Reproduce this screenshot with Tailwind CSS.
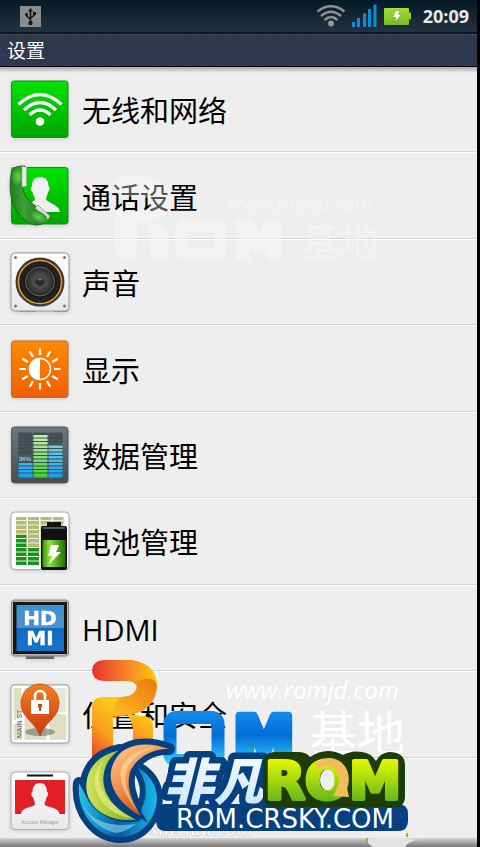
<!DOCTYPE html>
<html lang="zh-CN">
<head>
<meta charset="utf-8">
<meta name="viewport" content="width=device-width, initial-scale=1">
<title>设置</title>
<script src="https://cdn.jsdelivr.net/npm/@tailwindcss/browser@4"></script>
</head>
<body class="bg-black font-['Open_Sans','Noto_Sans_CJK_SC',sans-serif]">
<div class="relative mr-[3px] flex min-h-screen flex-col overflow-hidden bg-[#eeeeee]">
  <header>
    <div class="flex h-[34px] items-center border-b-2 border-[#10161f] bg-linear-to-b from-[#031a27] to-[#243242] pr-2 pl-5">
      <svg class="size-[21px]" viewBox="0 0 21 21" role="img" aria-label="USB"><rect width="21" height="21" fill="#8b8b8b"/><g fill="none" stroke="#141414" stroke-width="1.5"><path d="M10.500 16V4M10.500 14C10.500 11.500 6.500 12 6.500 8.500M10.500 12.500C10.500 10.500 14.500 11 14.500 7.500"/></g><path d="M10.500 2L13 5.500H8z" fill="#141414"/><circle cx="10.500" cy="17" r="2.200" fill="#141414"/><circle cx="6.500" cy="8.500" r="1.500" fill="#141414"/><path d="M13 6h3v3h-3z" fill="#141414"/></svg>
      <div class="ml-auto flex items-center">
        <svg class="h-[22px] w-[30px]" viewBox="0 0 30 22" role="img" aria-label="Wi-Fi"><g fill="none" stroke="#8e9192" stroke-width="2.500"><path d="M1.500 6.500Q15-4 28.500 6.500"/><path d="M5 11Q15 2.500 25 11"/><path d="M8.500 15Q15 9 21.500 15"/></g><circle cx="15" cy="18.500" r="2.900" fill="#999"/></svg>
        <svg class="ml-1.5 h-[24px] w-[25px]" viewBox="0 0 25 24" role="img" aria-label="信号"><path fill="#0d8fd4" d="M0 18h3v5H0zM5 14h3v9H5zM11 9.500h3V23h-3zM16 5h3v18h-3zM21.500.500h3V23h-3z"/></svg>
        <svg class="ml-[7px] h-[17px] w-[27px]" viewBox="0 0 27 17" role="img" aria-label="充电"><defs><linearGradient id="bt" x2="0" y2="1"><stop stop-color="#a3dc36"/><stop offset="1" stop-color="#76bd1b"/></linearGradient></defs><path fill="url(#bt)" d="M1 0h23q1 0 1 1v3.500h2v7h-2V16q0 1-1 1H1q-1 0-1-1V1q0-1 1-1z"/><path d="M11.500 2.500h4.500l-1.500 4h3L10.500 15l1.300-5.500H8.500z" fill="#fff" stroke="#548719" stroke-width=".5"/></svg>
        <time class="ml-3 text-[18px] leading-6 font-bold text-[#e6e8ea]">20:09</time>
      </div>
    </div>
    <div class="flex h-[33px] items-center border-t border-b border-t-[#454e60] border-b-black bg-[#2e364c] bg-[repeating-linear-gradient(45deg,#ffffff08_0px,#ffffff08_1px,transparent_1px,transparent_3px)] pl-[7px]">
      <h1 class="text-[19px] leading-6 text-white">设置</h1>
    </div>
  </header>
  <div class="h-0"><div class="h-[6px] bg-linear-to-b from-black/30 to-transparent"></div></div>

  <ul class="mb-1 flex flex-1 flex-col text-[29px] leading-9 text-black">
    <li class="flex flex-1 border-b border-[#d5d5d5]"><a href="#wireless" class="flex flex-1 items-center gap-[10px] pl-2">
      <svg class="size-16 shrink-0 drop-shadow-sm" viewBox="0 0 64 64" aria-hidden="true"><defs><linearGradient id="gr" x2="0" y2="1"><stop stop-color="#00e400"/><stop offset="1" stop-color="#00a500"/></linearGradient></defs><rect x="3.500" y="4" width="56.500" height="56.500" rx="2.500" fill="url(#gr)" stroke="#188c22"/><g fill="none" stroke="#fff" stroke-width="3.300"><path d="M10.500 27.500Q32 7.500 53.500 27.500"/><path d="M16 33Q32 18 48 33"/><path d="M21.500 38Q32 28 42.500 38"/></g><circle cx="32" cy="44.500" r="4.300" fill="#fff"/></svg>
      <span class="pt-1">无线和网络</span></a></li>
    <li class="flex flex-1 border-t border-b border-t-white border-b-[#d5d5d5]"><a href="#call" class="flex flex-1 items-center gap-[10px] pl-2">
      <svg class="size-16 shrink-0 drop-shadow-sm" viewBox="0 0 64 64" aria-hidden="true"><defs><linearGradient id="ph" x2="1"><stop stop-color="#1c7a22"/><stop offset=".35" stop-color="#3fa032"/><stop offset="1" stop-color="#187520"/></linearGradient><radialGradient id="pe"><stop stop-color="#6cd04e"/><stop offset="1" stop-color="#2b9327"/></radialGradient></defs><rect x="3.500" y="3.500" width="56.500" height="56.500" rx="2.500" fill="url(#gr)" stroke="#188c22"/><path d="M32 13c6 0 8.500 4 8.500 9 2 1 1 5-.500 6-.500 4-2 5-2 7 1 4 13 5 14 13H15c1-7 11-9 12-13 0-2-2-3-2.500-7-2-1-2-5-.500-6 0-5 2-9 8-9z" fill="#f0f0f0"/><path d="M2.500 14Q3 2 13 2H17V22L14 23Q17 36 28 42L40 54Q34 64 23 60Q-1 47 2.500 14Z" fill="url(#ph)" stroke="#145d1b" stroke-width=".8"/><ellipse cx="10" cy="13" rx="6.500" ry="9.500" fill="url(#pe)"/><path d="M14 2.500L18.500 3V22L14 23Z" fill="#e4eee4" stroke="#8ba38d" stroke-width=".5"/><path d="M27 44L30 41L42 52L40 56Z" fill="#ddd" stroke="#70846f" stroke-width=".6"/><ellipse cx="30.500" cy="53" rx="9.500" ry="5.500" transform="rotate(25 30.500 53)" fill="url(#pe)"/></svg>
      <span class="pt-1">通话设置</span></a></li>
    <li class="flex flex-1 border-t border-b border-t-white border-b-[#d5d5d5]"><a href="#sound" class="flex flex-1 items-center gap-[10px] pl-2">
      <svg class="size-16 shrink-0 drop-shadow-sm" viewBox="0 0 64 64" aria-hidden="true"><defs><linearGradient id="wh" x2="0" y2="1"><stop stop-color="#fff"/><stop offset="1" stop-color="#e6e7e9"/></linearGradient><radialGradient id="sp"><stop stop-color="#202020"/><stop offset=".28" stop-color="#181818"/><stop offset=".32" stop-color="#555"/><stop offset="1" stop-color="#272727"/></radialGradient></defs><path d="M10 60h18v2H12zM44 60h17l-2 2H46z" fill="#999"/><rect x="3" y="3" width="58" height="58" rx="4" fill="url(#wh)" stroke="#999"/><g fill="#777"><circle cx="7.500" cy="7.500" r="1.500"/><circle cx="56.500" cy="7.500" r="1.500"/><circle cx="7.500" cy="56" r="1.500"/><circle cx="56.500" cy="56" r="1.500"/></g><circle cx="32" cy="32" r="24.500" fill="#3b3b3d"/><circle cx="32" cy="32" r="21.500" fill="#171717" stroke="#e79b20" stroke-width="1.500"/><circle cx="32" cy="32" r="18" fill="none" stroke="#303030" stroke-width="3" stroke-dasharray="1 1"/><circle cx="32" cy="31.500" r="14.500" fill="url(#sp)" stroke="#666"/><circle cx="32" cy="31" r="4.500" fill="#292929"/><ellipse cx="32" cy="29" rx="3" ry="1.500" fill="#666"/></svg>
      <span class="pt-1">声音</span></a></li>
    <li class="flex flex-1 border-t border-b border-t-white border-b-[#d5d5d5]"><a href="#display" class="flex flex-1 items-center gap-[10px] pl-2">
      <svg class="size-16 shrink-0 drop-shadow-sm" viewBox="0 0 64 64" aria-hidden="true"><defs><linearGradient id="og" x2="0" y2="1"><stop stop-color="#ff8a00"/><stop offset="1" stop-color="#ed5f00"/></linearGradient></defs><rect x="3.500" y="4" width="56.500" height="56.500" rx="2.500" fill="url(#og)" stroke="#bd6d28"/><circle cx="32" cy="32" r="10.500" fill="none" stroke="#fff" stroke-width="1.500"/><path d="M32 21a11 11 0 0 0 0 22z" fill="#fff"/><g stroke="#fff" stroke-width="2.200"><path d="M32 11.500v6.500M32 46v6.500M11.500 32h6.500M46 32h6.500"/><path d="M32 11.500v6.500M32 46v6.500M11.500 32h6.500M46 32h6.500" transform="rotate(30 32 32)"/><path d="M32 11.500v6.500M32 46v6.500M11.500 32h6.500M46 32h6.500" transform="rotate(60 32 32)"/></g></svg>
      <span class="pt-1">显示</span></a></li>
    <li class="flex flex-1 border-t border-b border-t-white border-b-[#d5d5d5]"><a href="#data" class="flex flex-1 items-center gap-[10px] pl-2">
      <svg class="size-16 shrink-0 drop-shadow-sm" viewBox="0 0 64 64" aria-hidden="true"><defs><linearGradient id="sl" x2="0" y2="1"><stop stop-color="#6c777d"/><stop offset="1" stop-color="#454d53"/></linearGradient><linearGradient id="b1" x2="0" y2="1"><stop stop-color="#78cdec"/><stop offset="1" stop-color="#10a2f1"/></linearGradient><linearGradient id="b2" x2="0" y2="1"><stop stop-color="#d0efb7"/><stop offset="1" stop-color="#3fd136"/></linearGradient></defs><rect x="3.500" y="4" width="56.500" height="56" rx="3" fill="url(#sl)" stroke="#50585e"/><path d="M10.500 9.500h14v45h-14zM25.500 9.500h14v45h-14zM40.500 9.500h14v45h-14z" fill="#485158"/><path d="M10.500 39h14v15.500h-14zM40.500 22h14v32.500h-14z" fill="url(#b1)"/><path d="M25.500 12h14v42.500h-14z" fill="url(#b2)"/><path d="M10 11.500h45M10 15h45M10 18.500h45M10 22h45M10 25.500h45M10 29h45M10 32.500h45M10 36h45M10 39.500h45M10 43h45M10 46.500h45M10 50h45" stroke="#394d4d" stroke-width="1.100"/><rect x="10.500" y="32" width="14" height="6" fill="#4f5960"/><text x="11" y="38" font-family="Liberation Sans" font-weight="bold" font-size="6" fill="#8bd1ea">36%</text></svg>
      <span class="pt-1">数据管理</span></a></li>
    <li class="flex flex-1 border-t border-b border-t-white border-b-[#d5d5d5]"><a href="#battery" class="flex flex-1 items-center gap-[10px] pl-2">
      <svg class="size-16 shrink-0 drop-shadow-sm" viewBox="0 0 64 64" aria-hidden="true"><defs><linearGradient id="bb" x2="1"><stop stop-color="#3b8d12"/><stop offset=".3" stop-color="#90e337"/><stop offset="1" stop-color="#246c08"/></linearGradient></defs><rect x="3" y="3" width="58" height="57.500" rx="4" fill="#fff" stroke="#aaa"/><path d="M8 8h10.500v48H8zM20 8h11v48H20zM32.500 8h11v48h-11zM45 8h10.500v20H45z" fill="#b4bb79"/><path d="M8 26h10.500v30H8zM20 39h11v17H20z" fill="#16951c"/><path d="M7 11.500h50M7 16h50M7 20.500h50M7 25h50M7 29.500h35M7 34h35M7 38.500h35M7 43h35M7 47.500h35M7 52h35" stroke="#edf0df" stroke-width="1"/><path d="M39 13h14v4h4q2 0 2 2v40q0 2-2 2H35q-2 0-2-2V19q0-2 2-2h4z" fill="#111"/><path d="M35 18h22v2H35z" fill="#555"/><path d="M34.500 31h23v27h-23z" fill="url(#bb)"/><path d="M43 36h8l-3 7h5L41 55l3-8h-4z" fill="#fff"/></svg>
      <span class="pt-1">电池管理</span></a></li>
    <li class="flex flex-1 border-t border-b border-t-white border-b-[#d5d5d5]"><a href="#hdmi" class="flex flex-1 items-center gap-[10px] pl-2">
      <svg class="size-16 shrink-0 drop-shadow-sm" viewBox="0 0 64 64" aria-hidden="true"><defs><linearGradient id="hd" x2="0" y2="1"><stop stop-color="#3e91cf"/><stop offset=".5" stop-color="#4a92d1"/><stop offset=".51" stop-color="#126ac0"/><stop offset="1" stop-color="#1173d2"/></linearGradient></defs><path d="M18 60h28v3H18z" fill="#666"/><rect x="3.500" y="4" width="57" height="56" rx="3" fill="#b6b6b6" stroke="#888"/><rect x="5" y="6" width="54" height="52" fill="#161616"/><rect x="8.500" y="9" width="47.500" height="46" fill="url(#hd)"/><g font-family="DejaVu Sans" font-weight="bold" font-size="20" fill="#fff" stroke="#fff" stroke-width=".4" text-anchor="middle"><text x="32" y="29">HD</text><text x="32" y="49">MI</text></g></svg>
      <span class="pt-1">HDMI</span></a></li>
    <li class="flex flex-1 border-t border-b border-t-white border-b-[#d5d5d5]"><a href="#security" class="flex flex-1 items-center gap-[10px] pl-2">
      <svg class="size-16 shrink-0 drop-shadow-sm" viewBox="0 0 64 64" aria-hidden="true"><defs><linearGradient id="pn" x2="0" y2="1"><stop stop-color="#f08121"/><stop offset="1" stop-color="#cf3210"/></linearGradient></defs><rect x="3" y="3" width="58" height="58" rx="3" fill="#fff" stroke="#999"/><path d="M5.500 6h53v52h-53z" fill="#dedfc3"/><path d="M15 6v52M5 41l18-12 36 2M40 31v27" stroke="#fff" stroke-width="3" fill="none"/><path d="M24 6h34v25L24 27z" fill="#e8e8d8"/><text transform="translate(14 56) rotate(-90)" font-family="Liberation Sans" font-size="7" fill="#666">MAIN ST.</text><ellipse cx="32" cy="50" rx="15" ry="4" fill="#777" opacity=".65"/><path d="M32 54Q30 47 20 37Q13 30 13 21A19 19 0 0 1 51 21Q51 30 44 37Q34 47 32 54Z" fill="url(#pn)" stroke="#b84313" stroke-width=".7"/><path d="M23 18h18v14H23z" fill="#fff"/><path d="M27 18v-4a5 5 0 0 1 10 0v4" fill="none" stroke="#fff" stroke-width="2.600"/><path d="M30 22h4v3l-1 1v3h-2v-3l-1-1z" fill="#c94912"/></svg>
      <span class="pt-1">位置和安全</span></a></li>
    <li class="flex flex-1 border-t border-white"><a href="#accounts" aria-label="Account Manager" class="flex flex-1 items-center gap-[10px] pl-2">
      <svg class="size-16 shrink-0 drop-shadow-sm" viewBox="0 0 64 64" aria-hidden="true"><rect x="3" y="3" width="58" height="57.500" rx="4" fill="url(#wh)" stroke="#aaa"/><path d="M19 5.500h26v2H19z" fill="#111"/><path d="M7 11h50v34H7z" fill="#e41e27"/><path d="M32 14c5 0 7 4 7 9 2 0 1 5-.500 5-.500 4-2 5-2 7 1 4 14 2 15 10H13c1-8 13-6 14-10 0-2-1-3-2-7-2 0-2-5-.500-5 0-5 2-9 7.500-9z" fill="#f0f0f0"/><text x="32" y="54.500" font-family="Liberation Sans" font-size="4.800" text-anchor="middle" fill="#999">Account Manager</text></svg>
    </a></li>
  </ul>
  <div class="absolute inset-x-0 bottom-0 h-[9px] bg-linear-to-b from-[#d5d5d5] to-[#777777]"></div>

  <!-- faded watermark -->
  <svg class="pointer-events-none absolute top-[160px] left-[100px] h-[110px] w-[300px]" viewBox="100 160 300 110" aria-hidden="true">
    <g fill="#fff" stroke="none" opacity=".33">
      <path d="M122 177H147Q171 181 171 201Q169 221 148 222H137V253Q136 260 126 260Q115 260 115 253V219Q115 211 124 211H141Q150 210 150 203Q149 197 143 197H122Q114 194 114 187Q115 178 122 177Z"/>
      <path d="M148 224Q167 222 168 238V260H150Z"/>
      <path fill-rule="evenodd" d="M188 219h26q13 0 13 13v15q0 13-13 13h-26q-13 0-13-13v-15q0-13 13-13zm4 12q-4 0-4 4v9q0 4 4 4h18q4 0 4-4v-9q0-4-4-4z"/>
      <text x="235" y="257" font-family="DejaVu Sans" font-weight="bold" font-size="48" stroke="#fff" stroke-width="6" stroke-linejoin="round">M</text>
      <text x="299" y="256" font-family="Noto Sans CJK SC" font-size="40">基地</text>
      <text x="228" y="211" font-family="Open Sans" font-style="italic" font-size="20">www.romjd.com</text>
    </g>
  </svg>

  <!-- site badges over the end of the list -->
  <svg class="pointer-events-none absolute bottom-0 left-[60px] h-[197px] w-[360px]" viewBox="60 650 360 197" role="img" aria-label="ROM 基地, 非凡 ROM">
    <defs>
      <linearGradient id="r1" x1="0" x2="1"><stop stop-color="#e8302a"/><stop offset=".45" stop-color="#f4772a"/><stop offset="1" stop-color="#ffcb08"/></linearGradient>
      <linearGradient id="r2" x1="0" y1="1" x2=".4" y2="0"><stop stop-color="#e83a26"/><stop offset=".5" stop-color="#f79a20"/><stop offset="1" stop-color="#ffc814"/></linearGradient>
      <linearGradient id="r3" x1="1" y1="0" x2="0" y2="1"><stop stop-color="#e87710"/><stop offset="1" stop-color="#ffbe1e"/></linearGradient>
      <linearGradient id="bl" gradientUnits="userSpaceOnUse" x1="0" y1="711" x2="0" y2="760"><stop stop-color="#128ced"/><stop offset=".5" stop-color="#056cd6"/><stop offset="1" stop-color="#2bc4fa"/></linearGradient>
      <linearGradient id="ge" x1="0" x2="1"><stop stop-color="#d4e35c"/><stop offset=".5" stop-color="#a4c936"/><stop offset="1" stop-color="#67a620"/></linearGradient>
      <linearGradient id="oe" x1="0" y1="0" x2=".6" y2="1"><stop stop-color="#ffcb8b"/><stop offset=".5" stop-color="#f2944d"/><stop offset="1" stop-color="#bd4a12"/></linearGradient>
      <linearGradient id="be" x1="0" x2="1"><stop stop-color="#25c5e8"/><stop offset=".5" stop-color="#075aa2"/><stop offset="1" stop-color="#18b8ec"/></linearGradient>
      <linearGradient id="tx" x2="0" y2="1"><stop stop-color="#fff"/><stop offset="1" stop-color="#c5e5fb"/></linearGradient>
      <linearGradient id="gt" gradientUnits="userSpaceOnUse" x1="0" y1="758" x2="0" y2="801"><stop stop-color="#eafa00"/><stop offset="1" stop-color="#64b81b"/></linearGradient>
    </defs>
    <g fill="#fff">
      <text x="226" y="699" font-family="Open Sans" font-style="italic" font-size="24">www.romjd.com</text>
      <text x="309" y="751" font-family="Noto Sans CJK SC" font-size="48">基地</text>
      <text x="150" y="836" font-family="Open Sans" font-style="italic" font-weight="bold" font-size="18" stroke="#bbb" stroke-width=".5">shendu.com</text>
    </g>
    <path d="M103 660H132Q157 664 157 686Q155 712 127 715L113 718V702L121 697Q138 697 137 689Q136 681 127 681H103Q92 680 92 670Q93 661 103 660Z" fill="url(#r1)"/>
    <path d="M137 681Q139 696 121 697Q112 702 113 716L127 715Q155 712 157 686Q155 674 137 681Z" fill="url(#r3)"/>
    <path d="M92 708Q92 697 103 697H121Q114 701 113 713V760H92Z" fill="url(#r2)"/>
    <path d="M125 711Q132 716 145 716Q153 718 153 728V752H133V730Q133 722 125 711Z" fill="url(#r2)"/>
    <rect x="170" y="717.500" width="48" height="43" rx="6" fill="none" stroke="url(#bl)" stroke-width="13"/>
    <text x="234" y="760" font-family="DejaVu Sans" font-weight="bold" font-size="60" fill="url(#bl)" stroke="url(#bl)" stroke-width="8" stroke-linejoin="round">M</text>

    <path d="M165 804H398Q408 804 408 814V821Q408 831 398 831H165Q156 831 156 819Q156 804 165 804Z" fill="#06407f"/>
    <text x="164" y="800" font-family="Noto Sans CJK SC" font-weight="900" font-style="italic" font-size="50" fill="url(#tx)" stroke="#06407f" stroke-width="13" stroke-linejoin="round" paint-order="stroke">非凡</text>
    <path d="M274 752H298Q306 752 310 757Q326 746 343 755Q352 750 362 752Q371 753 376 761Q380 753 389 752Q404 752 405 764V796Q405 807 395 807H274Q263 806 263 796V763Q263 753 274 752Z" fill="#1e3c05"/>
    <ellipse cx="328" cy="780" rx="8" ry="11" fill="#eee"/>
    <text x="265" y="799" font-family="DejaVu Sans" font-weight="bold" font-size="52" fill="url(#gt)" stroke="url(#gt)" stroke-width="4" stroke-linejoin="round">ROM</text>
    <path d="M315 764Q328 753 341 762Q352 772 347 788L349 797L333 796L337 789Q343 776 333 767Q325 764 319 770Z" fill="#f2bd59"/>
    <text x="285" y="828" text-anchor="middle" font-family="DejaVu Sans" font-size="26" fill="#fff">ROM.CRSKY.COM</text>

    <g stroke="#06407f" stroke-width="12" stroke-linejoin="round" fill="#06407f">
      <path d="M79 783C76 812 96 837 120 837C144 837 157 816 157 797C156 784 149 774 138 768C147 782 148 796 142 807L140 821C118 826 94 814 86 796Z"/>
      <path d="M120 750C96 754 84 772 86 790C88 808 108 824 138 820C118 812 102 796 104 776C105 764 112 755 120 750Z"/>
      <path d="M169 749C150 742 124 741 114 762C104 782 118 804 141 816C131 800 126 786 130 772C136 758 152 748 169 749Z"/>
    </g>
    <path d="M79 783C76 812 96 837 120 837C144 837 157 816 157 797C156 784 149 774 138 768C147 782 148 796 142 807L140 821C118 826 94 814 86 796Z" fill="url(#be)"/>
    <path d="M84 807Q98 829 136 824Q126 832 116 833Q94 828 84 807Z" fill="#8edbe9" opacity=".6"/>
    <path d="M120 750C96 754 84 772 86 790C88 808 108 824 138 820C118 812 102 796 104 776C105 764 112 755 120 750Z" fill="url(#ge)" stroke="#06407f"/>
    <path d="M108 755Q84 778 103 803Q114 816 134 819Q101 801 99 778Q99 764 108 755Z" fill="#eef291" opacity=".6"/>
    <path d="M169 749C150 742 124 741 114 762C104 782 118 804 141 816C131 800 126 786 130 772C136 758 152 748 169 749Z" fill="url(#oe)" stroke="#06407f" stroke-width="5" paint-order="stroke"/>
    <path d="M155 747Q130 750 121 768Q117 786 138 812Q121 785 127 769Q134 754 155 747Z" fill="#ffe0ae" opacity=".55"/>
    <path d="M366 839Q370 847 374 847H405Q410 840 418 840L390 837Z" fill="#e4e4e4"/><path d="M366 838h2v4h-2zM406 833h2v4h-2z" fill="#8abf2d"/>
  </svg>
</div>
</body>
</html>
